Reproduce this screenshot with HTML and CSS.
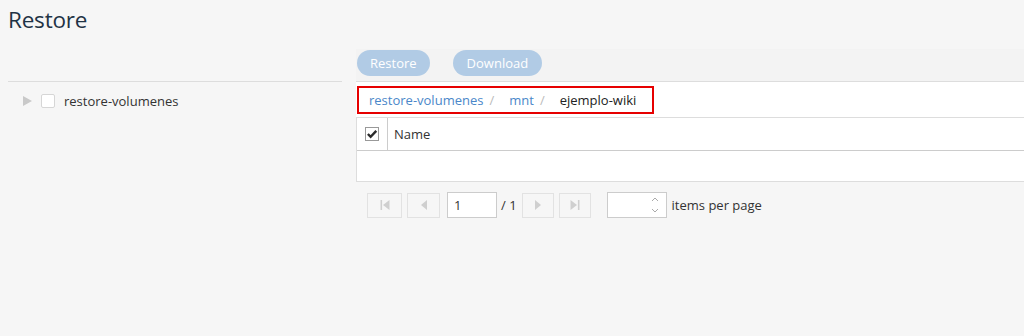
FILE: index.html
```html
<!DOCTYPE html>
<html lang="en">
<head>
  <meta charset="UTF-8" />
  <title>Restore</title>
  <link rel="stylesheet" href="styles.css">
</head>
<body>
  <h1 class="page-title">Restore</h1>

  <div class="layout">
    <aside class="tree">
      <div class="tree-item">
        <span class="tree-toggle"><svg viewBox="0 0 9 10" width="9" height="10"><path d="M0 0v10l9-5z" fill="#c9c9c9"/></svg></span>
        <span class="check"></span>
        <span class="tree-label">restore-volumenes</span>
      </div>
    </aside>

    <main class="browser">
      <div class="toolbar">
        <button class="btn" disabled>Restore</button>
        <button class="btn btn-wide" disabled>Download</button>
      </div>

      <div class="crumbs-bar">
        <nav class="crumbs">
          <a href="#">restore-volumenes</a>
          <span class="sep">/</span>
          <a href="#">mnt</a>
          <span class="sep">/</span>
          <span class="current">ejemplo-wiki</span>
        </nav>
      </div>

      <div class="grid">
        <div class="grid-head">
          <div class="cell-check">
            <span class="check checked">
              <svg viewBox="0 0 14 14" width="14" height="14"><path d="M2.2 7l3.2 3.3 6.6-7" fill="none" stroke="#2b2b2b" stroke-width="2.8"/></svg>
            </span>
          </div>
          <div class="cell-name">Name</div>
        </div>
        <div class="grid-row"></div>
      </div>

      <div class="pager">
        <button class="pg-btn pg-first"><svg viewBox="0 0 12 12" width="12" height="12"><rect x="1.5" y="1" width="1.6" height="10" fill="#cfcfcf"/><path d="M10.5 1v10L4 6z" fill="#cfcfcf"/></svg></button>
        <button class="pg-btn pg-prev"><svg viewBox="0 0 12 12" width="12" height="12"><path d="M9 1v10L3 6z" fill="#cfcfcf"/></svg></button>
        <input class="pg-input" type="text" value="1">
        <span class="pg-total">/ 1</span>
        <button class="pg-btn"><svg viewBox="0 0 12 12" width="12" height="12"><path d="M3 1v10L9 6z" fill="#cfcfcf"/></svg></button>
        <button class="pg-btn"><svg viewBox="0 0 12 12" width="12" height="12"><path d="M1.5 1v10L8 6z" fill="#cfcfcf"/><rect x="8.9" y="1" width="1.6" height="10" fill="#cfcfcf"/></svg></button>
        <div class="pg-size">
          <span class="spin">
            <svg viewBox="0 0 10 22" width="10" height="22"><path d="M2 7l3-3 3 3M2 15l3 3 3-3" fill="none" stroke="#aaa" stroke-width="1"/></svg>
          </span>
        </div>
        <span class="pg-label">items per page</span>
      </div>
    </main>
  </div>
</body>
</html>
```

FILE: styles.css
```css
* {
  margin: 0;
  padding: 0;
  box-sizing: border-box;
}

body {
  font-family: 'Open Sans', 'Liberation Sans', sans-serif;
  font-size: 13px;
  background-color: #f6f6f6;
  color: #333;
  height: 336px;
  overflow: hidden;
}

.page-title {
  font-size: 22.5px;
  font-weight: 400;
  color: #1f3345;
  padding: 4px 0 0 8px;
  height: 49px;
  letter-spacing: -0.2px;
}

.layout {
  display: flex;
}

.tree {
  width: 334px;
  margin: 32px 0 0 8px;
  border-top: 1px solid #ddd;
}

.tree-item {
  display: flex;
  align-items: center;
  height: 37px;
  padding-left: 15px;
}

.tree-toggle {
  display: flex;
  width: 18px;
}

.check {
  display: inline-flex;
  align-items: center;
  justify-content: center;
  width: 14px;
  height: 14px;
  background: #fff;
  border: 1px solid #d6d6d6;
  border-radius: 2px;
}

.tree-label {
  margin-left: 9px;
  color: #333;
}

.browser {
  flex: 1;
  margin-left: 14px;
}

.toolbar {
  display: flex;
  gap: 23px;
  height: 33px;
  background-color: #f3f3f3;
  padding: 1px 0 0 1px;
  border-bottom: 1px solid #ddd;
}

.btn {
  height: 26px;
  padding: 0 13px;
  border: none;
  border-radius: 13px;
  background-color: #b1cbe5;
  color: #fff;
  font-family: inherit;
  font-size: 13px;
}

.btn-wide {
  padding: 0 14px;
}

.crumbs-bar {
  background: #fff;
  height: 36px;
  padding: 4px 0 0 1px;
  border-bottom: 1px solid #ddd;
}

.crumbs {
  display: inline-flex;
  align-items: center;
  height: 28px;
  width: 297px;
  border: 2px solid #e60000;
  padding-left: 10px;
}

.crumbs a {
  color: #4a87c9;
  text-decoration: none;
}

.crumbs .sep {
  color: #bbb;
  margin: 0 15px 0 6px;
}

.crumbs .current {
  color: #222;
}

.grid {
  background: #fff;
  border-left: 1px solid #ddd;
  border-bottom: 1px solid #ddd;
}

.grid-head {
  display: flex;
  height: 33px;
  border-bottom: 1px solid #ccc;
}

.cell-check {
  width: 31px;
  border-right: 1px solid #ccc;
  display: flex;
  align-items: center;
  justify-content: center;
}

.check.checked {
  border-color: #999;
  border-radius: 0;
}

.cell-name {
  display: flex;
  align-items: center;
  padding-left: 6px;
  color: #333;
}

.grid-row {
  height: 30px;
}

.pager {
  display: flex;
  align-items: center;
  padding: 10px 0 0 11px;
}

.pg-btn {
  width: 32px;
  height: 25px;
  background: #f6f6f6;
  border: 1px solid #e2e2e2;
  display: flex;
  align-items: center;
  justify-content: center;
  margin-right: 5px;
}

.pg-first {
  width: 35px;
}

.pg-prev {
  width: 33px;
}

.pg-input {
  width: 50px;
  height: 26px;
  border: 1px solid #ccc;
  font-family: inherit;
  font-size: 13px;
  padding-left: 6px;
  color: #333;
  margin-left: 2px;
}

.pg-total {
  margin: 0 5px 0 4px;
  color: #333;
}

.pg-size {
  width: 60px;
  height: 26px;
  background: #fff;
  border: 1px solid #ccc;
  margin-left: 11px;
  display: flex;
  justify-content: flex-end;
  align-items: center;
  padding-right: 6px;
}

.spin {
  display: flex;
}

.pg-label {
  margin-left: 5px;
  color: #333;
}
```
